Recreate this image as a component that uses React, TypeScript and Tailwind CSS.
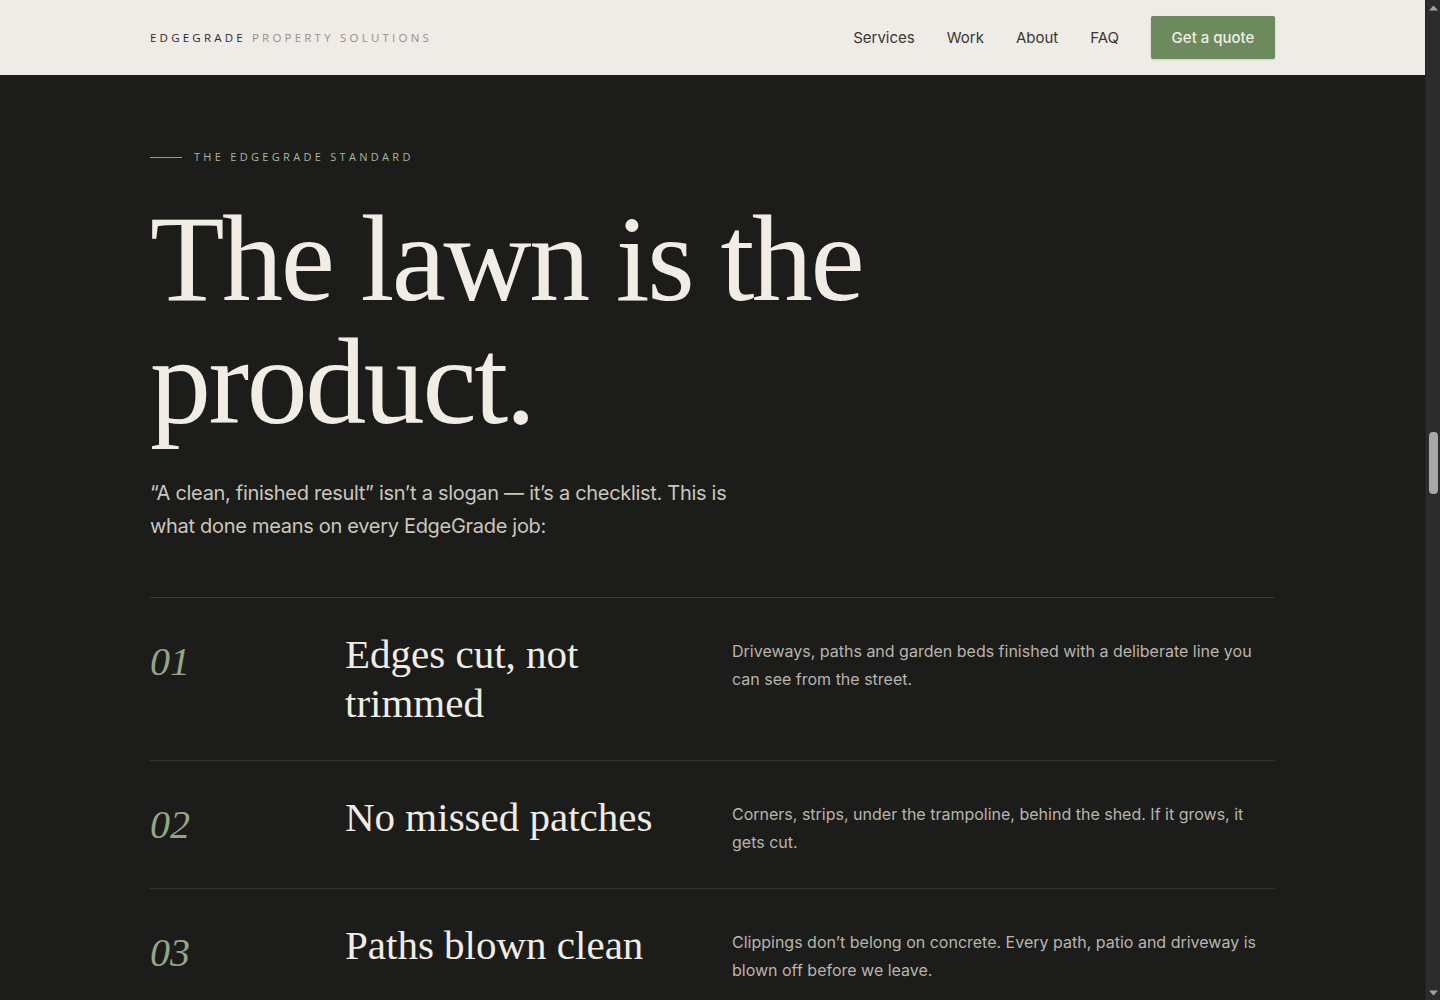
import React from "react";

const serif = { fontFamily: '"Liberation Serif", "Times New Roman", serif' };

const rows = [
  {
    n: "01",
    title: "Edges cut, not trimmed",
    desc: "Driveways, paths and garden beds finished with a deliberate line you can see from the street.",
  },
  {
    n: "02",
    title: "No missed patches",
    desc: "Corners, strips, under the trampoline, behind the shed. If it grows, it gets cut.",
  },
  {
    n: "03",
    title: "Paths blown clean",
    desc: "Clippings don’t belong on concrete. Every path, patio and driveway is blown off before we leave.",
  },
];

function Scrollbar() {
  return (
    <div className="relative w-[15px] shrink-0 border-l border-[#242424] bg-[#2c2c2c]">
      <div className="flex h-[15px] items-center justify-center">
        <svg width="9" height="6" viewBox="0 0 9 6">
          <path d="M0 5.5 L4.5 0.5 L9 5.5 Z" fill="#a3a3a3" />
        </svg>
      </div>
      <div className="absolute left-[3px] top-[432px] h-[62px] w-[9px] rounded-[4px] bg-[#a8a8a8]" />
      <div className="absolute left-0 top-[985px] flex h-[15px] w-[15px] items-center justify-center">
        <svg width="9" height="6" viewBox="0 0 9 6">
          <path d="M0 0.5 L4.5 5.5 L9 0.5 Z" fill="#a3a3a3" />
        </svg>
      </div>
    </div>
  );
}

export default function App() {
  return (
    <div className="flex h-[1000px] overflow-hidden bg-[#1c1c1a] font-['Inter',sans-serif]">
      <div className="min-w-0 flex-1">
        <header className="h-[75px] bg-[#efebe6]">
          <div className="mx-auto flex h-full max-w-[1125px] items-center justify-between">
            <div className="flex items-center pt-px text-[11.5px] tracking-[0.28em] font-['Open_Sans',sans-serif]">
              <span className="text-[#2c2a27]">EDGEGRADE</span>
              <span className="ml-[6px] text-[#9a8f84]">PROPERTY SOLUTIONS</span>
            </div>
            <nav className="flex items-center text-[15px] text-[#3a3733]">
              <a className="mr-[32px] pt-[2px]">Services</a>
              <a className="mr-[32px] pt-[2px]">Work</a>
              <a className="mr-[32px] pt-[2px]">About</a>
              <a className="mr-[32px] pt-[2px]">FAQ</a>
              <a className="flex h-[43px] w-[124px] items-center justify-center rounded-[2px] bg-[#6c8a5d] pt-px text-[15px] font-medium text-[#eef0e6] shadow-sm">
                Get a quote
              </a>
            </nav>
          </div>
        </header>

        <section className="mx-auto max-w-[1125px] pt-[74px] pb-[200px]">
          <div className="flex items-center">
            <span className="h-px w-[32px] bg-[#8fa07f]" />
            <span className="ml-[12px] text-[11px] leading-4 tracking-[0.3em] text-[#aab79e] font-['Open_Sans',sans-serif]">
              THE EDGEGRADE STANDARD
            </span>
          </div>

          <h1
            style={serif}
            className="mt-[32px] text-[122px] leading-[123px] tracking-[-0.02em] text-[#f1ece4]"
          >
            The lawn is the
            <br />
            product.
          </h1>

          <p className="mt-[34px] max-w-[600px] text-[20px] leading-[33px] tracking-[-0.015em] text-[#cbc6be]">
            “A clean, finished result” isn’t a slogan — it’s a checklist. This is
            what done means on every EdgeGrade job:
          </p>

          <div className="mt-[54px] border-t border-[#3b3a37]">
            {rows.map((r) => (
              <div
                key={r.n}
                className="grid grid-cols-[195px_387px_1fr] border-b border-[#33322f] pt-[32px] pb-[32px]"
              >
                <div
                  style={serif}
                  className="pt-[8px] text-[40px] italic leading-[48px] text-[#93a685]"
                >
                  {r.n}
                </div>
                <div style={serif} className="pr-[40px] text-[41px] leading-[49px] text-[#f1ece4]">
                  {r.title}
                </div>
                <div className="pt-[8px] text-[16px] leading-[27.5px] text-[#b9b4ad]">
                  {r.desc}
                </div>
              </div>
            ))}
          </div>
        </section>
      </div>
      <Scrollbar />
    </div>
  );
}
